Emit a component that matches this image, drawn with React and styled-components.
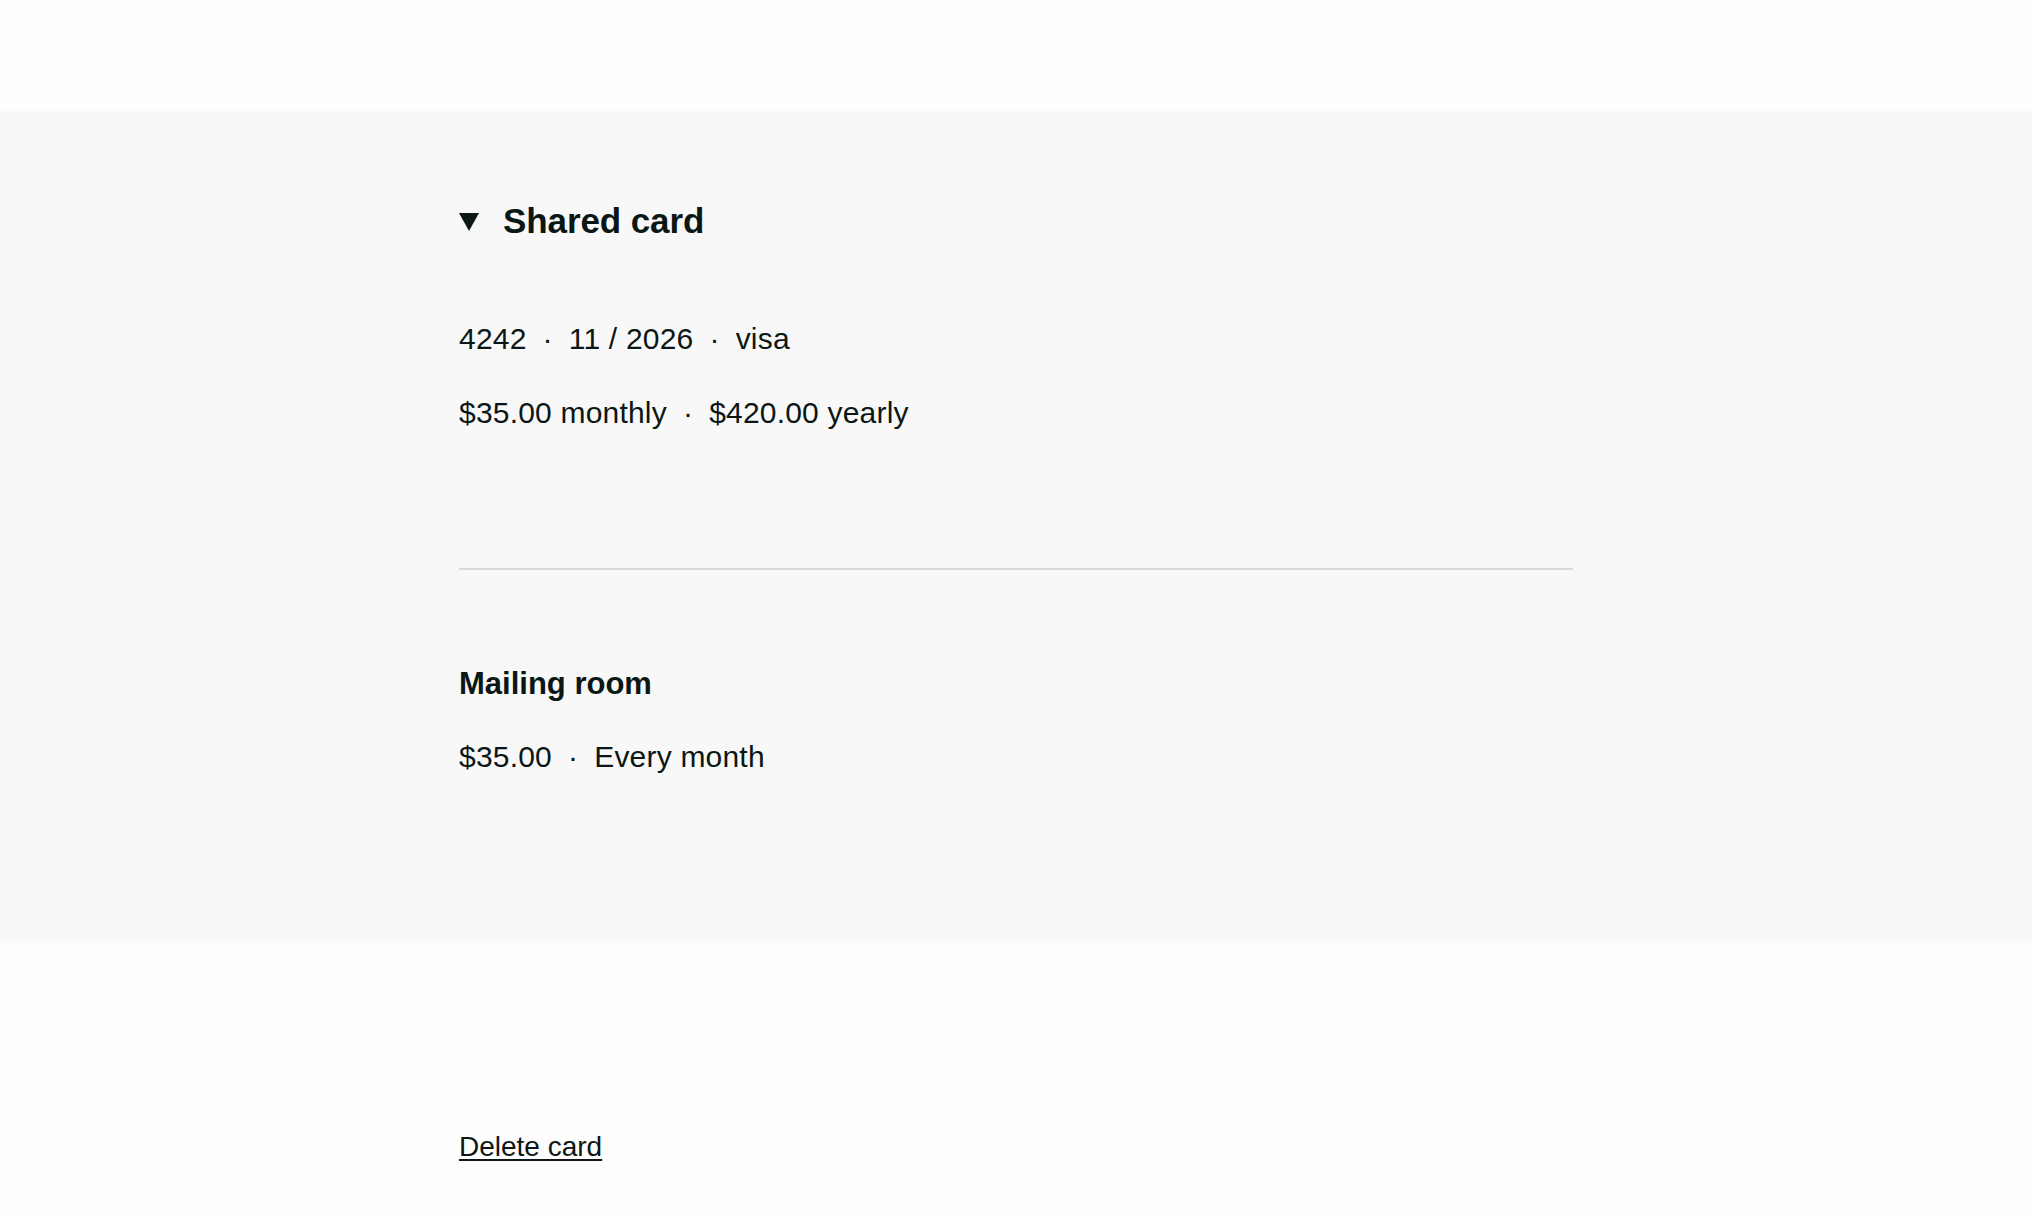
import React from 'react';
import styled, { createGlobalStyle } from 'styled-components';

const GlobalStyle = createGlobalStyle`
  html, body {
    margin: 0;
    padding: 0;
    background: #fdfdfd;
    font-family: "Liberation Sans", Arial, Helvetica, sans-serif;
    color: #0b1714;
  }
`;

const Page = styled.div`
  padding-top: 111px;
  min-height: 1216px;
  box-sizing: border-box;
`;

const Band = styled.section`
  background: #f8f8f8;
  padding: 89px 0 164px;
`;

const Inner = styled.div`
  width: 1114px;
  margin: 0 auto;
`;

const Summary = styled.div`
  display: flex;
  align-items: center;
  gap: 24px;
  height: 41px;
  font-size: 35px;
  font-weight: 700;
  letter-spacing: -0.1px;
`;

const Caret = styled.svg`
  width: 20px;
  height: 18px;
  flex: none;
  margin-top: 2px;
`;

const Details = styled.div`
  margin-top: 78px;
  display: flex;
  flex-direction: column;
  gap: 34px;
`;

const Line = styled.div`
  font-size: 30px;
  line-height: 40px;
  letter-spacing: 0.2px;
`;

const Sep = styled.span`
  margin: 0 16px;
`;

const Divider = styled.hr`
  border: none;
  height: 2px;
  background: #d9d9d9;
  margin: 135px 0 94px;
`;

const ItemTitle = styled.div`
  font-size: 31px;
  line-height: 40px;
  font-weight: 700;
`;

const ItemMeta = styled(Line)`
  margin-top: 33px;
`;

const Footer = styled.div`
  width: 1114px;
  margin: 186px auto 0;
`;

const DeleteLink = styled.a`
  font-size: 28px;
  line-height: 40px;
  color: #0b1714;
  text-decoration: underline;
  text-underline-offset: 3px;
  text-decoration-thickness: 2px;
  cursor: pointer;
`;

const Dot = () => <Sep>·</Sep>;

const App = () => (
  <Page>
    <GlobalStyle />
    <Band>
      <Inner>
        <Summary>
          <Caret viewBox="0 0 20 18">
            <polygon points="0,0 20,0 10,18" fill="#0b1714" />
          </Caret>
          Shared card
        </Summary>
        <Details>
          <Line>
            4242<Dot />11 / 2026<Dot />visa
          </Line>
          <Line>
            $35.00 monthly<Dot />$420.00 yearly
          </Line>
        </Details>
        <Divider />
        <ItemTitle>Mailing room</ItemTitle>
        <ItemMeta>
          $35.00<Dot />Every month
        </ItemMeta>
      </Inner>
    </Band>
    <Footer>
      <DeleteLink>Delete card</DeleteLink>
    </Footer>
  </Page>
);

export default App;
